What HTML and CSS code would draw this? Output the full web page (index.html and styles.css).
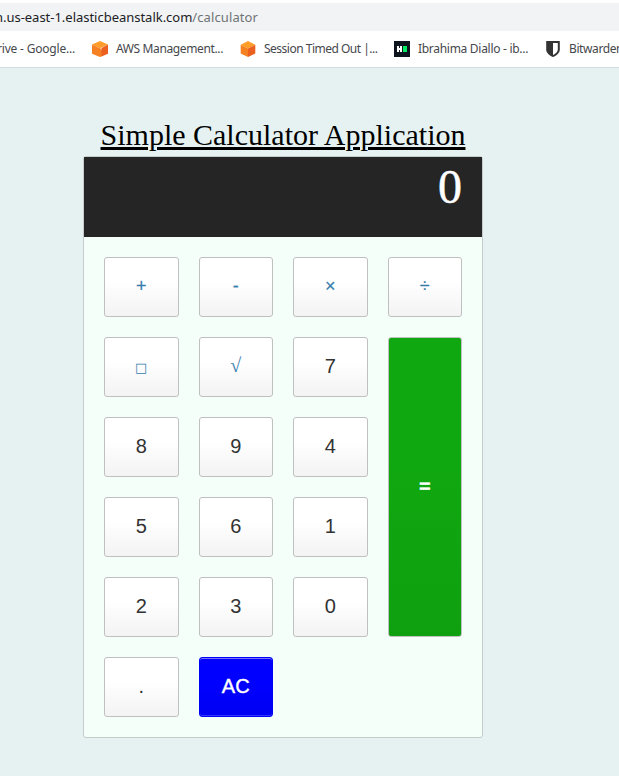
FILE: index.html
```
<!DOCTYPE html>
<html lang="en">
<head>
<meta charset="utf-8">
<title>Simple Calculator Application</title>
<link rel="stylesheet" href="styles.css">
</head>
<body>
<header class="chrome">
  <div class="address"><span class="host">n.us-east-1.elasticbeanstalk.com</span><span class="path">/calculator</span></div>
  <nav class="bookmarks">
    <div class="bookmark first"><span>rive - Google...</span></div>
    <div class="bookmark aws">
      <svg width="16" height="16" viewBox="0 0 16 16"><path fill="#ff9d2b" d="M8 0 16 3.6 8 7.2 0 3.6Z"/><path fill="#f68122" d="M0 3.6 8 7.2 10 9V15.200L8 16 0 12.800Z"/><path fill="#e9601f" d="M9.500 7 16 3.600V12.800L9.500 15.400Z"/></svg>
      <span>AWS Management...</span>
    </div>
    <div class="bookmark session">
      <svg width="16" height="16" viewBox="0 0 16 16"><path fill="#ff9d2b" d="M8 0 15.3 3.8 8 7.6.7 3.8Z"/><path fill="#f68122" d="M.7 3.8 8 7.6V16L.7 12.4Z"/><path fill="#e9601f" d="M8 7.6 15.3 3.8V12.4L8 16Z"/></svg>
      <span>Session Timed Out |...</span>
    </div>
    <div class="bookmark rank">
      <svg width="16" height="16" viewBox="0 0 16 16"><path fill="#0e141e" d="M0 0H16V16H0Z"/><path fill="#fff" d="M3 5H5V7H6V5H8V11H6V9H5V11H3Z"/><path fill="#00ea64" d="M9 5H13V11H9Z"/></svg>
      <span>Ibrahima Diallo - ib...</span>
    </div>
    <div class="bookmark vault">
      <svg width="16" height="16" viewBox="0 0 16 16"><path fill="#333" d="M1.2 0H14.8V8.500C14.800 12 11.500 14.500 8 16 4.500 14.500 1.200 12 1.200 8.500Z"/><path fill="#fff" d="M8 2H12.800V8.500C12.800 11 10.500 12.800 8 14Z"/></svg>
      <span>Bitwarden</span>
    </div>
  </nav>
</header>
<main class="page">
  <h1 class="title">Simple Calculator Application</h1>
  <section class="calculator">
    <div class="screen">0</div>
    <div class="keys">
      <button class="key operator">+</button>
      <button class="key operator">-</button>
      <button class="key operator">×</button>
      <button class="key operator">÷</button>
      <button class="key operator square">□</button>
      <button class="key operator root">√</button>
      <button class="key">7</button>
      <button class="key">8</button>
      <button class="key">9</button>
      <button class="key">4</button>
      <button class="key">5</button>
      <button class="key">6</button>
      <button class="key">1</button>
      <button class="key">2</button>
      <button class="key">3</button>
      <button class="key">0</button>
      <button class="key">.</button>
      <button class="key clear">AC</button>
      <button class="key equals">=</button>
    </div>
  </section>
</main>
</body>
</html>
```
FILE: styles.css
```
* { box-sizing: border-box; }
body {
  margin: 0;
  height: 776px;
  overflow: hidden;
  background: #e6f2f2;
  font-family: "Liberation Serif", serif;
}
.chrome {
  height: 68px;
  padding-top: 3px;
  background: #fff;
  border-bottom: 1px solid #d5dce0;
  font-family: "Noto Sans", sans-serif;
  overflow: hidden;
}
.address {
  display: flex;
  justify-content: flex-end;
  height: 28px;
  padding-right: 361px;
  line-height: 28px;
  font-size: 13px;
  white-space: nowrap;
  color: #202124;
  background: #f1f3f4;
}
.host { letter-spacing: -0.02px; }
.path { color: #6f7377; letter-spacing: 0.1px; }
.bookmarks {
  display: flex;
  gap: 16px;
  height: 36px;
  font-size: 12px;
  line-height: 36px;
  color: #45484c;
  white-space: nowrap;
}
.bookmark { display: flex; flex: none; align-items: center; gap: 8px; }
.bookmark svg { flex: none; }
.first { width: 76px; padding-right: 1px; justify-content: flex-end; letter-spacing: -0.2px; }
.aws { width: 132px; letter-spacing: -0.37px; }
.session { width: 138px; letter-spacing: -0.5px; }
.rank { width: 135px; letter-spacing: -0.29px; }
.vault { letter-spacing: -0.4px; }

.page {
  display: flex;
  flex-direction: column;
  align-items: center;
  width: 400px;
  margin: 50px 0 0 83px;
}
.title {
  margin: 0;
  height: 38px;
  line-height: 34px;
  font-size: 30px;
  font-weight: 400;
  white-space: nowrap;
  text-decoration: underline;
  text-decoration-thickness: 3px;
  text-underline-offset: 2px;
  color: #000;
}
.calculator {
  width: 400px;
  background: #f5fffa;
  border: 1px solid #c5cccb;
  border-radius: 3px;
}
.screen {
  height: 80px;
  padding: 0 20px;
  line-height: 59px;
  font-size: 48px;
  text-align: right;
  color: #fff;
  -webkit-text-stroke: 0.5px #fff;
  background: #252525;
}
.keys {
  display: grid;
  grid-template-columns: repeat(4, 1fr);
  grid-auto-rows: 60px;
  gap: 20px;
  padding: 20px;
}
.key {
  display: flex;
  align-items: center;
  justify-content: center;
  padding: 0 0 2px;
  border: 1px solid #c0c0c0;
  border-radius: 3px;
  background: linear-gradient(#fff 40%, #f3f3f3);
  font: 20px "Liberation Sans", sans-serif;
  color: #333;
}
.operator {
  color: #337cac;
  font-size: 18px;
  -webkit-text-stroke: 0.2px #337cac;
}
.root { font: 20px "Liberation Serif", serif; padding-bottom: 4px; -webkit-text-stroke: 0; }
.square { font: 13px "DejaVu Sans", sans-serif; padding: 1px 0 0; -webkit-text-stroke: 0; }
.equals {
  grid-column: 4;
  grid-row: 2 / 6;
  color: #fff;
  -webkit-text-stroke: 0.6px #fff;
  background: linear-gradient(#10a810 40%, #0fa00f);
}
.clear {
  color: #fff;
  -webkit-text-stroke: 0.4px #fff;
  background: linear-gradient(#00f 40%, #0000f3);
  border-color: #0000f5;
  box-shadow: inset 0 1px #7373ff, inset 0 -1px #3333ff;
}
```
